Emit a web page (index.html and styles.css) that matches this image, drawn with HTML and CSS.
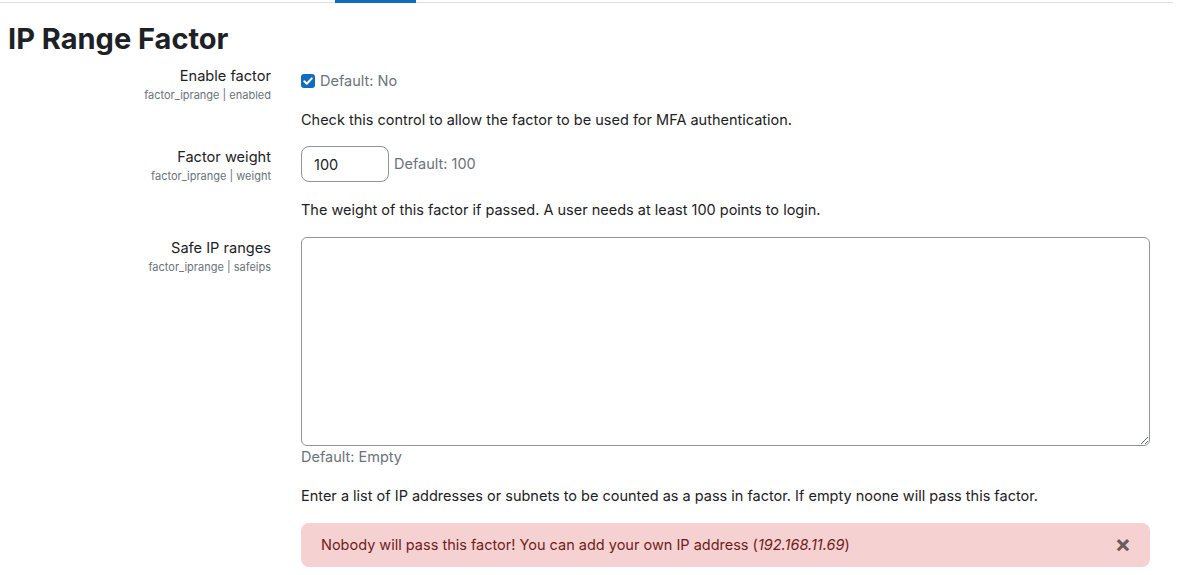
FILE: index.html
```html
<!DOCTYPE html>
<html lang="en">
<head>
    <meta charset="UTF-8">
    <title>IP Range Factor</title>
    <link rel="stylesheet" href="styles.css">
</head>
<body>
    <div class="tabbar">
        <div class="tab-active"></div>
    </div>

    <h2 class="page-title">IP Range Factor</h2>

    <div class="settings">
        <div class="setting">
            <div class="setting-label">
                <label>Enable factor</label>
                <span class="setting-name">factor_iprange | enabled</span>
            </div>
            <div class="setting-control">
                <div class="checkbox-line">
                    <span class="checkbox">
                        <svg viewBox="0 0 14 14" width="14" height="14"><path d="M3.3 7.2l2.5 2.5 5-5.3" fill="none" stroke="#fff" stroke-width="2" stroke-linecap="round" stroke-linejoin="round"/></svg>
                    </span>
                    <span class="default-value">Default: No</span>
                </div>
                <p class="description">Check this control to allow the factor to be used for MFA authentication.</p>
            </div>
        </div>

        <div class="setting">
            <div class="setting-label">
                <label>Factor weight</label>
                <span class="setting-name">factor_iprange | weight</span>
            </div>
            <div class="setting-control">
                <div class="input-line">
                    <input type="text" class="text-input" value="100">
                    <span class="default-value">Default: 100</span>
                </div>
                <p class="description">The weight of this factor if passed. A user needs at least 100 points to login.</p>
            </div>
        </div>

        <div class="setting">
            <div class="setting-label">
                <label>Safe IP ranges</label>
                <span class="setting-name">factor_iprange | safeips</span>
            </div>
            <div class="setting-control">
                <textarea class="textarea"></textarea>
                <div class="default-value">Default: Empty</div>
                <p class="description">Enter a list of IP addresses or subnets to be counted as a pass in factor. If empty noone will pass this factor.</p>
                <div class="alert">
                    <span>Nobody will pass this factor! You can add your own IP address (<em>192.168.11.69</em>)</span>
                    <span class="alert-close">&times;</span>
                </div>
            </div>
        </div>
    </div>
</body>
</html>
```

FILE: styles.css
```css
body {
    margin: 0;
    font-family: 'Inter', 'Liberation Sans', sans-serif;
    font-size: 15px;
    line-height: 1.5;
    color: #1d2125;
    background-color: #fff;
}

.tabbar {
    width: 1173px;
    height: 2px;
    border-bottom: 1px solid #dee2e6;
}

.tab-active {
    margin-left: 335px;
    width: 81px;
    height: 3px;
    background-color: #0f6cbf;
}

.page-title {
    margin: 19px 0 7px 8px;
    font-size: 29px;
    font-weight: 700;
    line-height: 1.2;
}

.settings {
    width: 1150px;
}

.setting {
    display: grid;
    grid-template-columns: 271px 1fr;
    column-gap: 30px;
    margin-bottom: 15px;
}

.setting-label {
    display: flex;
    flex-direction: column;
    align-items: flex-end;
    padding-top: 2px;
    text-align: right;
}

.setting-label label {
    font-size: 14.6px;
    line-height: 21px;
}

.setting-name {
    font-size: 11px;
    line-height: 17px;
    color: #6a737b;
}

.setting-control {
    min-width: 0;
}

.checkbox-line {
    display: flex;
    align-items: center;
    gap: 5px;
    padding-top: 6px;
}

.checkbox {
    display: inline-flex;
    width: 14px;
    height: 14px;
    border-radius: 3px;
    background-color: #0f6cbf;
}

.default-value {
    color: #6a737b;
    font-size: 14.5px;
}

.description {
    margin: 17px 0 0;
    font-size: 14.5px;
}

.input-line {
    display: flex;
    align-items: center;
    gap: 5px;
    padding-top: 1px;
}

.text-input {
    box-sizing: border-box;
    width: 88px;
    height: 36px;
    padding: 0 12px;
    border: 1px solid #8f959e;
    border-radius: 8px;
    font-family: inherit;
    font-size: 14.5px;
    color: #1d2125;
}

.textarea {
    display: block;
    box-sizing: border-box;
    width: 100%;
    height: 209px;
    margin-top: 1px;
    border: 1px solid #8f959e;
    border-radius: 6px;
}

.alert {
    display: flex;
    justify-content: space-between;
    align-items: center;
    margin-top: 16px;
    padding: 11px 20px 12px;
    border-radius: 8px;
    background-color: #f6d1d1;
    color: #6e1d1d;
    font-size: 14.5px;
}

.alert-close {
    font-size: 24px;
    line-height: 20px;
    font-weight: 700;
    color: #6a5a5b;
    margin-right: -1px;
}
```
